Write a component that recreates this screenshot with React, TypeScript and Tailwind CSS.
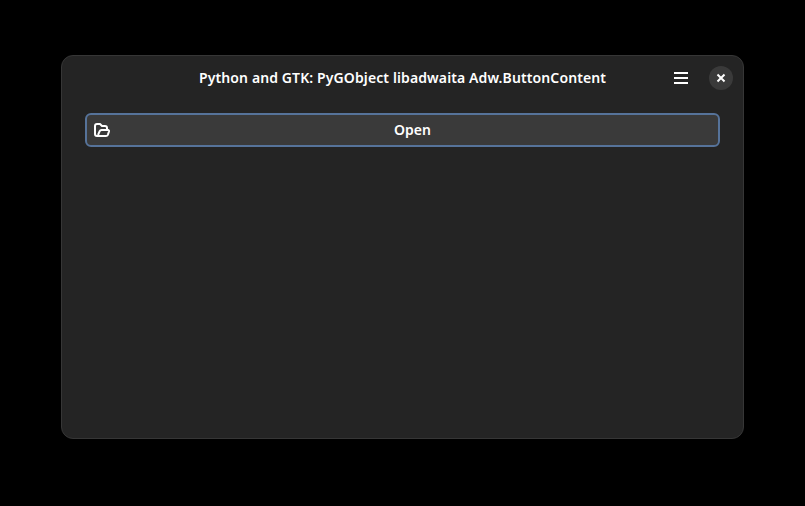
export default function App() {
  return (
    <div className="flex h-[506px] w-[805px] justify-center bg-black pt-[55px] font-['Noto_Sans',sans-serif] text-white">
      <div className="h-[384px] w-[683px] rounded-[12px] border border-[#363636] bg-[#242424]">
        <header className="grid h-11 grid-cols-[1fr_auto_1fr] items-center px-[10px]">
          <span />
          <h1 className="w-[407px] whitespace-nowrap pb-px text-[14px] font-semibold tracking-[0.11px]">
            Python and GTK: PyGObject libadwaita Adw.ButtonContent
          </h1>
          <div className="flex items-center justify-end gap-5">
            <button aria-label="Menu">
              <svg width="16" height="16" viewBox="0 0 16 16" fill="white">
                <path d="M1 2h14v2H1zM1 7h14v2H1zM1 12h14v2H1z" />
              </svg>
            </button>
            <button aria-label="Close" className="flex size-6 items-center justify-center rounded-full bg-[#3a3a3a]">
              <svg width="16" height="16" viewBox="0 0 16 16" fill="none" stroke="white" strokeWidth="2" strokeLinecap="square">
                <path d="M5.200 5.200l5.600 5.600M10.800 5.200l-5.600 5.600" />
              </svg>
            </button>
          </div>
        </header>
        <main className="px-[23px] pt-[13px]">
          <button className="flex h-[34px] w-full items-center rounded-[6px] border-2 border-[#56739a] bg-[#3a3a3a] px-[7px] text-[14px] font-semibold">
            <svg width="16" height="16" viewBox="0 0 16 16" fill="none" stroke="white" strokeWidth="2" strokeLinejoin="round">
              <path d="M13 7V6a2 2 0 0 0-2-2H8L6 2H3a2 2 0 0 0-2 2v8a2 2 0 0 0 2 2h9a2 2 0 0 0 1.800-1.200l1.200-3.300A1.200 1.200 0 0 0 14 8H7.500a2 2 0 0 0-1.800 1.200L4 13" />
            </svg>
            <span className="flex-1 pb-0.5 pl-1 text-center">Open</span>
          </button>
        </main>
      </div>
    </div>
  );
}
